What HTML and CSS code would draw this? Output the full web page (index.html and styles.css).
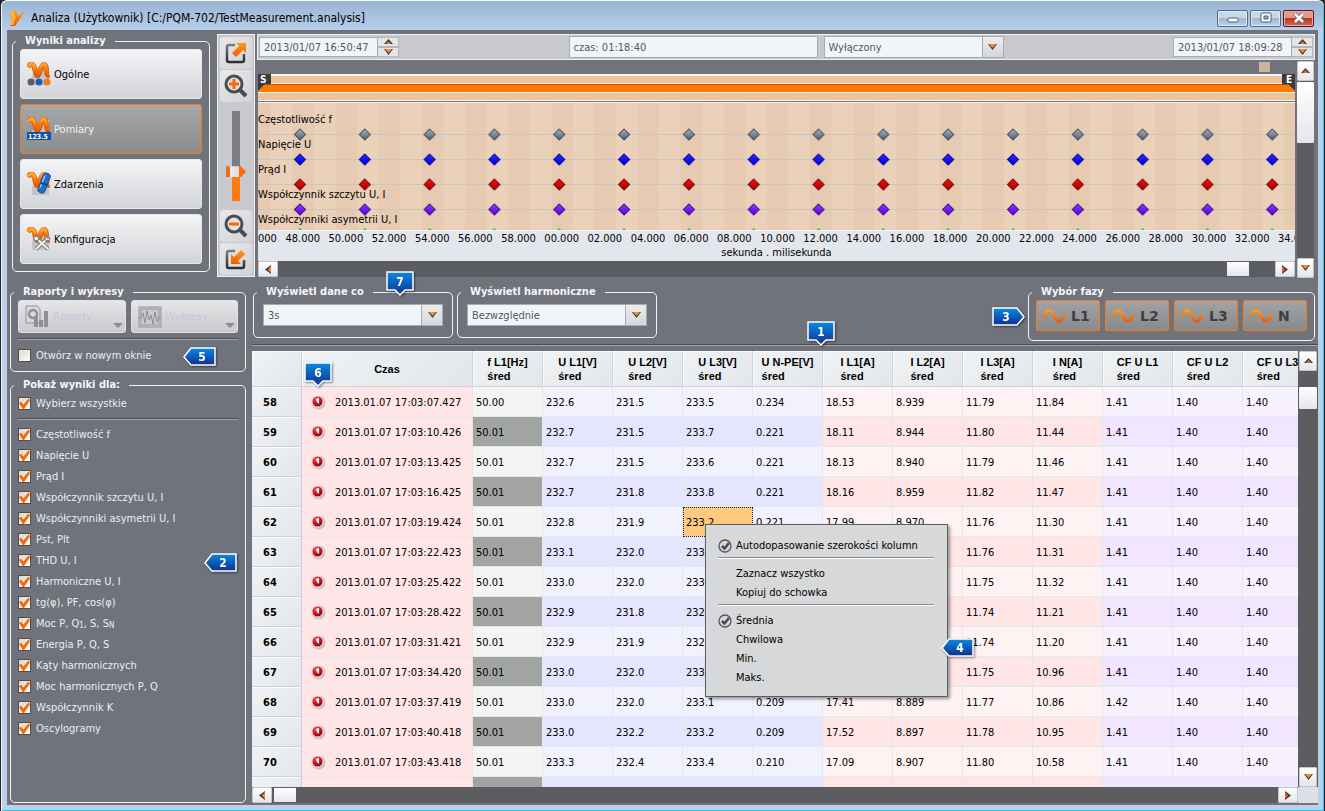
FILE: index.html
```html
<!DOCTYPE html>
<html lang="pl">
<head>
    <meta charset="UTF-8">
    <meta name="viewport" content="width=device-width, initial-scale=1.0">
    <title>Analiza</title>
    <link rel="stylesheet" href="styles.css">
</head>
<body>
    <svg class="defs" width="0" height="0" aria-hidden="true">
        <defs>
            <linearGradient id="orange" x1="0" y1="0" x2="0" y2="1">
                <stop offset="0" stop-color="#ff9a1e"/><stop offset="1" stop-color="#f25a00"/>
            </linearGradient>
            <linearGradient id="blue" x1="0" y1="0" x2="0" y2="1">
                <stop offset="0" stop-color="#0a8ae6"/><stop offset="1" stop-color="#10308c"/>
            </linearGradient>
            <linearGradient id="dark" x1="0" y1="0" x2="0" y2="1">
                <stop offset="0" stop-color="#77797d"/><stop offset="1" stop-color="#2c2e32"/>
            </linearGradient>
            <radialGradient id="red" cx="0.4" cy="0.3" r="0.7">
                <stop offset="0" stop-color="#f06060"/><stop offset="0.6" stop-color="#c80c14"/><stop offset="1" stop-color="#8c0008"/>
            </radialGradient>
            <linearGradient id="dGrey" x1="0" y1="0" x2="0" y2="1"><stop offset="0" stop-color="#a9b4c0"/><stop offset="1" stop-color="#4e5c70"/></linearGradient>
            <linearGradient id="dBlue" x1="0" y1="0" x2="0" y2="1"><stop offset="0" stop-color="#2a2aff"/><stop offset="1" stop-color="#0000e0"/></linearGradient>
            <linearGradient id="dRed" x1="0" y1="0" x2="0" y2="1"><stop offset="0" stop-color="#f81010"/><stop offset="1" stop-color="#a00000"/></linearGradient>
            <linearGradient id="dViolet" x1="0" y1="0" x2="0" y2="1"><stop offset="0" stop-color="#8a3cff"/><stop offset="1" stop-color="#5a00e0"/></linearGradient>
        </defs>
        <symbol id="wave" viewBox="0 0 24 24">
            <path d="M13 3h9v20H5v-9z" fill="#c2c4c9"/>
            <path d="M1 5C4 0 7 2 8 8S11 16 13 9S18 0 19 6S20 14 22 13" fill="none" stroke="#c65204" stroke-width="5"/>
            <path d="M1 5C4 0 7 2 8 8S11 15 13 8S18 0 19 6S20 13 22 12" fill="none" stroke="url(#orange)" stroke-width="4"/>
            <path d="M1 4C4 0 7 1 8 6M14 5C16 1 18 1 19 5" fill="none" stroke="#ffb75a" stroke-width="1"/>
        </symbol>
        <symbol id="sine" viewBox="0 0 22 16">
            <path d="M1 9C4 0 8 1 11 8S18 15 21 7" fill="none" stroke="url(#orange)" stroke-width="3"/>
        </symbol>
        <symbol id="up" viewBox="0 0 9 6"><path d="M0 5L4.500 0L9 5z" fill="#3c3c3f"/><path d="M2 5L4.500 2L7 5z" fill="#ff6a1a"/></symbol>
        <symbol id="down" viewBox="0 0 9 6"><path d="M0 0L4.500 6L9 0z" fill="#3c3c3f"/><path d="M1 0L4.500 4L8 0z" fill="#ff8a2a"/></symbol>
        <symbol id="left" viewBox="0 0 6 9"><path d="M6 0L0 4.500L6 9z" fill="#3c3c3f"/><path d="M6 1L3 4.500L6 8z" fill="#ff8a2a"/></symbol>
        <symbol id="right" viewBox="0 0 6 9"><path d="M0 0L6 4.500L0 9z" fill="#3c3c3f"/><path d="M0 1L3 4.500L0 8z" fill="#ff5a1a"/></symbol>
        <symbol id="tag-down" viewBox="0 0 30 26">
            <path d="M1 1h26v18h-8l-5 5l-5-5H1z" fill="url(#blue)" stroke="#fff" stroke-width="1.500"/>
        </symbol>
        <symbol id="tag-left" viewBox="0 0 34 20">
            <path d="M1 10L8 1h24v17H8z" fill="url(#blue)" stroke="#fff" stroke-width="1.500"/>
        </symbol>
        <symbol id="tag-right" viewBox="0 0 34 20">
            <path d="M32 10L25 1H1v17h24z" fill="url(#blue)" stroke="#fff" stroke-width="1.500"/>
        </symbol>
        <symbol id="ticked" viewBox="0 0 14 14">
            <circle cx="7" cy="7" r="6" fill="none" stroke="#55575f" stroke-width="1.300"/>
            <path d="M4 7l2.500 2.500L11 4" fill="none" stroke="#45474f" stroke-width="2.500"/>
        </symbol>
        <symbol id="clock" viewBox="0 0 15 15">
            <circle cx="7.500" cy="7.500" r="7" fill="#c9c4c8"/>
            <circle cx="6.500" cy="6.500" r="5.500" fill="url(#red)" stroke="#eee" stroke-width="1"/>
            <path d="M5 4l3-1v6l-2-2z" fill="#fff"/>
        </symbol>
    </svg>

    <div class="window">
        <header class="titlebar">
            <svg class="logo" width="17" height="18" viewBox="0 0 17 18">
                <path d="M1 2h6l2 5l7-5l-6 9l-4 6H1l2-4z" fill="url(#orange)"/>
                <path d="M1 2h3l3 6l-3 8H1l2-5z" fill="#ffb52a"/>
            </svg>
            <h1>Analiza (Użytkownik) [C:/PQM-702/TestMeasurement.analysis]</h1>
            <div class="window-buttons">
                <button aria-label="Minimalizuj"><svg width="12" height="12"><rect x="1" y="6" width="10" height="4" rx="1" fill="#fff" stroke="#555d6c"/></svg></button>
                <button aria-label="Maksymalizuj"><svg width="12" height="12"><rect x="1" y="1" width="10" height="9" rx="1" fill="#fff" stroke="#555d6c"/><rect x="4" y="4" width="4" height="3" fill="#9db6d4" stroke="#555d6c"/></svg></button>
                <button class="close" aria-label="Zamknij"><svg width="12" height="12"><path d="M2 2l8 8M10 2l-8 8" stroke="#555d6c" stroke-width="4"/><path d="M2 2l8 8M10 2l-8 8" stroke="#fff" stroke-width="2.500"/></svg></button>
            </div>
        </header>

        <main class="content">
            <section class="top">
                <fieldset class="results">
                    <legend>Wyniki analizy</legend>
                    <button class="nav">
                        <svg width="24" height="24"><use href="#wave"/><circle cx="4" cy="20" r="3.500" fill="#5a5d63"/><circle cx="12" cy="20" r="3.500" fill="#1a5fc0"/><circle cx="20" cy="20" r="3.500" fill="#f47a1e"/></svg>
                        Ogólne
                    </button>
                    <button class="nav active">
                        <svg width="24" height="24"><use href="#wave"/><rect x="0" y="15" width="24" height="8" fill="#1450a8"/><text x="1" y="22" font-size="7" font-weight="bold" fill="#fff">123.5</text></svg>
                        Pomiary
                    </button>
                    <button class="nav">
                        <svg width="24" height="24"><use href="#wave"/><path d="M16 3Q17 1 19 1L22 2Q24 3 23 6L18 19Q17 22 14 21L12 20Q10 19 11 17z" fill="#1f6fc8" stroke="#164f94"/><path d="M17 4l2-1l-5 12l-2 2z" fill="#9fd0ff"/><path d="M14 11l6 2" stroke="#0f3f80" stroke-width="2"/></svg>
                        Zdarzenia
                    </button>
                    <button class="nav">
                        <svg width="24" height="24"><use href="#wave"/><path d="M9 11L21 22M21 11L9 22" stroke="#77797e" stroke-width="4"/><path d="M9 11L21 22M21 11L9 22" stroke="#f4f4f4" stroke-width="2"/><path d="M7 9l5 1l-1 4l-4-1zM18 8l2 3l3 0l-1 3l-4-1z" fill="#f4f4f4" stroke="#77797e"/></svg>
                        Konfiguracja
                    </button>
                </fieldset>

                <div class="toolbar">
                    <button aria-label="Powiększ okno">
                        <svg width="24" height="24"><path d="M11 4H5Q3 4 3 6v13q0 2 2 2h13q2 0 2-2v-6" fill="none" stroke="url(#dark)" stroke-width="2.500"/><path d="M12 2h10v10l-3-3l-7 7l-4-4l7-7z" fill="url(#orange)"/></svg>
                    </button>
                    <button aria-label="Przybliż">
                        <svg width="24" height="24"><path d="M16 16l6 6" stroke="#4a4c50" stroke-width="4"/><circle cx="10" cy="10" r="8" fill="#e3e3e6" stroke="#4a4c50" stroke-width="3"/><path d="M10 5v10M5 10h10" stroke="#f46a0a" stroke-width="3"/></svg>
                    </button>
                    <input type="range" class="zoom" min="0" max="100" value="30" aria-label="Powiększenie">
                    <button aria-label="Oddal">
                        <svg width="24" height="24"><path d="M16 16l6 6" stroke="#4a4c50" stroke-width="4"/><circle cx="10" cy="10" r="8" fill="#e3e3e6" stroke="#4a4c50" stroke-width="3"/><path d="M5 10h10" stroke="#f46a0a" stroke-width="3"/></svg>
                    </button>
                    <button aria-label="Dopasuj">
                        <svg width="24" height="24"><path d="M11 4H5Q3 4 3 6v13q0 2 2 2h13q2 0 2-2v-6" fill="none" stroke="url(#dark)" stroke-width="2.500"/><path d="M7 17V7l3 3l7-7l4 4l-7 7l3 3z" fill="url(#orange)"/></svg>
                    </button>
                </div>

                <div class="timeline">
                    <div class="filters">
                        <div class="spin">
                            <input type="text" value="2013/01/07 16:50:47" aria-label="Początek">
                            <div class="spin-buttons">
                                <button aria-label="Później"><svg width="9" height="6"><use href="#up"/></svg></button>
                                <button aria-label="Wcześniej"><svg width="9" height="6"><use href="#down"/></svg></button>
                            </div>
                        </div>
                        <div class="middle">
                            <input type="text" class="duration" value="czas: 01:18:40" aria-label="Czas trwania">
                            <div class="combo">
                                <select aria-label="Tryb"><option>Wyłączony</option></select>
                                <span><svg width="9" height="6"><use href="#down"/></svg></span>
                            </div>
                        </div>
                        <div class="spin">
                            <input type="text" value="2013/01/07 18:09:28" aria-label="Koniec">
                            <div class="spin-buttons">
                                <button aria-label="Później"><svg width="9" height="6"><use href="#up"/></svg></button>
                                <button aria-label="Wcześniej"><svg width="9" height="6"><use href="#down"/></svg></button>
                            </div>
                        </div>
                    </div>
                    <div class="plot-row">
                        <div class="plot">
                            <div class="overview"><i></i></div>
                            <div class="range">
                                <div class="band"></div>
                                <div class="band selected"></div>
                                <div class="band"></div>
                                <span class="flag start">S</span>
                                <span class="flag end">E</span>
                            </div>
                            <div class="chart">
                                <svg width="100%" height="127">
                                    <defs>
                                        <pattern id="stripes" x="34.500" width="43.130" height="127" patternUnits="userSpaceOnUse"><rect width="21.600" height="127" fill="#e6cbb2"/></pattern>
                                        <pattern id="samples" x="10" width="64.820" height="127" patternUnits="userSpaceOnUse">
                                            <path d="M32 26l5.500 5.500l-5.500 5.500l-5.500-5.500z" fill="url(#dGrey)" stroke="#3c4654"/>
                                            <path d="M32 51l5.500 5.500l-5.500 5.500l-5.500-5.500z" fill="url(#dBlue)" stroke="#000090"/>
                                            <path d="M32 76l5.500 5.500l-5.500 5.500l-5.500-5.500z" fill="url(#dRed)" stroke="#700000"/>
                                            <path d="M32 101l5.500 5.500l-5.500 5.500l-5.500-5.500z" fill="url(#dViolet)" stroke="#380088"/>
                                            <path d="M32 125l2 2h-4z" fill="#1fd01f"/>
                                        </pattern>
                                    </defs>
                                    <rect width="100%" height="127" fill="#ebd1ba"/>
                                    <rect width="100%" height="127" fill="url(#stripes)"/>
                                    <path d="M0 31.500H4000M0 56.500H4000M0 81.500H4000M0 106.500H4000" stroke="#c8c6c2"/>
                                    <rect width="100%" height="127" fill="url(#samples)"/>
                                </svg>
                                <ul class="lanes">
                                    <li>Częstotliwość f</li>
                                    <li>Napięcie U</li>
                                    <li>Prąd I</li>
                                    <li>Współczynnik szczytu U, I</li>
                                    <li>Współczynniki asymetrii U, I</li>
                                </ul>
                            </div>
                            <div class="axis">
                                <div class="ticks" id="ticks"></div>
                                <p>sekunda . milisekunda</p>
                            </div>
                            <div class="hscroll far">
                                <button aria-label="W lewo"><svg width="6" height="9"><use href="#left"/></svg></button>
                                <div class="track"><i></i></div>
                                <button aria-label="W prawo"><svg width="6" height="9"><use href="#right"/></svg></button>
                            </div>
                        </div>
                        <div class="vscroll tall">
                            <button aria-label="W górę"><svg width="9" height="6"><use href="#up"/></svg></button>
                            <div class="track"><i></i></div>
                            <button aria-label="W dół"><svg width="9" height="6"><use href="#down"/></svg></button>
                        </div>
                    </div>
                </div>
            </section>

            <section class="bottom">
                <aside class="side">
                    <fieldset class="reports">
                        <legend>Raporty i wykresy</legend>
                        <div class="report-buttons">
                            <button disabled>
                                <svg width="24" height="24"><path d="M1 1h11l3 3v14H1z" fill="#d9dadd" stroke="#8e9095"/><circle cx="8" cy="9" r="4" fill="none" stroke="#8e9095" stroke-width="2.500"/><path d="M11 12v10M16 15v7M21 6v16" stroke="#8e9095" stroke-width="4"/></svg>
                                Raporty
                            </button>
                            <button disabled>
                                <svg width="24" height="24"><rect x="1" y="2" width="22" height="20" fill="#c9cacd" stroke="#96989d"/><rect x="3" y="4" width="18" height="16" fill="none" stroke="#96989d"/><path d="M0 13h3l2-5l2 10l2-12l2 9l2-5l2 9l2-12l2 10l2-5h2" fill="none" stroke="#8b8d92" stroke-width="1"/></svg>
                                Wykresy
                            </button>
                        </div>
                        <hr>
                        <label class="check"><input type="checkbox">Otwórz w nowym oknie</label>
                        <svg class="callout c5" width="34" height="20"><use href="#tag-left"/><text x="19" y="14">5</text></svg>
                    </fieldset>
                    <fieldset class="show">
                        <legend>Pokaż wyniki dla:</legend>
                        <label class="check"><input type="checkbox" checked>Wybierz wszystkie</label>
                        <hr>
                        <label class="check"><input type="checkbox" checked>Częstotliwość f</label>
                        <label class="check"><input type="checkbox" checked>Napięcie U</label>
                        <label class="check"><input type="checkbox" checked>Prąd I</label>
                        <label class="check"><input type="checkbox" checked>Współczynnik szczytu U, I</label>
                        <label class="check"><input type="checkbox" checked>Współczynniki asymetrii U, I</label>
                        <label class="check"><input type="checkbox" checked>Pst, Plt</label>
                        <label class="check"><input type="checkbox" checked>THD U, I</label>
                        <label class="check"><input type="checkbox" checked>Harmoniczne U, I</label>
                        <label class="check"><input type="checkbox" checked>tg(φ), PF, cos(φ)</label>
                        <label class="check"><input type="checkbox" checked><span>Moc P, Q<small>1</small>, S, S<small>N</small></span></label>
                        <label class="check"><input type="checkbox" checked>Energia P, Q, S</label>
                        <label class="check"><input type="checkbox" checked>Kąty harmonicznych</label>
                        <label class="check"><input type="checkbox" checked>Moc harmonicznych P, Q</label>
                        <label class="check"><input type="checkbox" checked>Współczynnik K</label>
                        <label class="check"><input type="checkbox" checked>Oscylogramy</label>
                        <svg class="callout c2" width="34" height="20"><use href="#tag-left"/><text x="19" y="14">2</text></svg>
                    </fieldset>
                </aside>

                <div class="data">
                    <div class="options">
                        <fieldset class="option">
                            <legend>Wyświetl dane co</legend>
                            <div class="combo">
                                <select aria-label="Wyświetl dane co"><option>3s</option></select>
                                <span><svg width="9" height="6"><use href="#down"/></svg></span>
                            </div>
                            <svg class="callout c7" width="30" height="26"><use href="#tag-down"/><text x="14" y="15">7</text></svg>
                        </fieldset>
                        <fieldset class="option">
                            <legend>Wyświetl harmoniczne</legend>
                            <div class="combo">
                                <select aria-label="Wyświetl harmoniczne"><option>Bezwzględnie</option></select>
                                <span><svg width="9" height="6"><use href="#down"/></svg></span>
                            </div>
                        </fieldset>
                        <fieldset class="phases">
                            <legend>Wybór fazy</legend>
                            <div class="phase-buttons">
                                <button><svg width="22" height="16"><use href="#sine"/></svg>L1</button>
                                <button><svg width="22" height="16"><use href="#sine"/></svg>L2</button>
                                <button><svg width="22" height="16"><use href="#sine"/></svg>L3</button>
                                <button><svg width="22" height="16"><use href="#sine"/></svg>N</button>
                            </div>
                            <svg class="callout c3" width="34" height="20"><use href="#tag-right"/><text x="14" y="14">3</text></svg>
                        </fieldset>
                    </div>
                    <hr>
                    <div class="grid">
                        <div class="grid-row">
                            <div class="table-clip">
                                <table>
                                    <thead><tr id="head"></tr></thead>
                                    <tbody id="rows"></tbody>
                                </table>
                            </div>
                            <div class="vscroll">
                                <button aria-label="W górę"><svg width="9" height="6"><use href="#up"/></svg></button>
                                <div class="track"><i></i></div>
                                <button aria-label="W dół"><svg width="9" height="6"><use href="#down"/></svg></button>
                            </div>
                        </div>
                        <div class="grid-bottom">
                            <div class="hscroll">
                                <button aria-label="W lewo"><svg width="6" height="9"><use href="#left"/></svg></button>
                                <div class="track"><i></i></div>
                                <button aria-label="W prawo"><svg width="6" height="9"><use href="#right"/></svg></button>
                            </div>
                        </div>
                        <div class="menu" role="menu">
                            <button role="menuitem"><svg width="14" height="14"><use href="#ticked"/></svg>Autodopasowanie szerokości kolumn</button>
                            <hr>
                            <button role="menuitem">Zaznacz wszystko</button>
                            <button role="menuitem">Kopiuj do schowka</button>
                            <hr>
                            <button role="menuitem"><svg width="14" height="14"><use href="#ticked"/></svg>Średnia</button>
                            <button role="menuitem">Chwilowa</button>
                            <button role="menuitem">Min.</button>
                            <button role="menuitem">Maks.</button>
                        </div>
                        <svg class="callout c1" width="30" height="26"><use href="#tag-down"/><text x="14" y="15">1</text></svg>
                        <svg class="callout c6" width="30" height="26"><use href="#tag-down"/><text x="14" y="15">6</text></svg>
                        <svg class="callout c4" width="34" height="20"><use href="#tag-left"/><text x="19" y="14">4</text></svg>
                    </div>
                </div>
            </section>
        </main>
    </div>

    <script>
        const columns = ["f L1[Hz]", "U L1[V]", "U L2[V]", "U L3[V]", "U N-PE[V]", "I L1[A]", "I L2[A]", "I L3[A]", "I N[A]", "CF U L1", "CF U L2", "CF U L3"];
        const kinds = ["f", "u", "u", "u", "u", "i", "i", "i", "i", "cf", "cf", "cf"];
        const rows = [
            ["07.427", "50.00 232.6 231.5 233.5 0.234 18.53 8.939 11.79 11.84 1.41 1.40 1.40"],
            ["10.426", "50.01 232.7 231.5 233.7 0.221 18.11 8.944 11.80 11.44 1.41 1.40 1.40"],
            ["13.425", "50.01 232.7 231.5 233.6 0.221 18.13 8.940 11.79 11.46 1.41 1.40 1.40"],
            ["16.425", "50.01 232.7 231.8 233.8 0.221 18.16 8.959 11.82 11.47 1.41 1.40 1.40"],
            ["19.424", "50.01 232.8 231.9 233.2 0.221 17.99 8.970 11.76 11.30 1.41 1.40 1.40"],
            ["22.423", "50.01 233.1 232.0 233.3 0.215 17.95 8.961 11.76 11.31 1.41 1.40 1.40"],
            ["25.422", "50.01 233.0 232.0 233.2 0.214 17.90 8.950 11.75 11.32 1.41 1.40 1.40"],
            ["28.422", "50.01 232.9 231.8 232.9 0.213 17.82 8.941 11.74 11.21 1.41 1.40 1.40"],
            ["31.421", "50.01 232.9 231.9 232.9 0.212 17.76 8.930 11.74 11.20 1.41 1.40 1.40"],
            ["34.420", "50.01 233.0 232.0 233.0 0.210 17.55 8.902 11.75 10.96 1.41 1.40 1.40"],
            ["37.419", "50.01 233.0 232.0 233.1 0.209 17.41 8.889 11.77 10.86 1.42 1.40 1.40"],
            ["40.418", "50.01 233.0 232.2 233.2 0.209 17.52 8.897 11.78 10.95 1.41 1.40 1.40"],
            ["43.418", "50.01 233.3 232.4 233.4 0.210 17.09 8.907 11.80 10.58 1.41 1.40 1.40"]
        ];

        let head = '<th class="num"></th><th class="time">Czas</th>';
        columns.forEach(name => head += `<th><span>${name}<br>śred</span></th>`);
        document.getElementById("head").innerHTML = head;

        let body = "";
        rows.forEach((row, r) => {
            body += `<tr><th class="num">${58 + r}</th><td class="time"><svg width="15" height="15"><use href="#clock"/></svg>2013.01.07 17:03:${row[0]}</td>`;
            row[1].split(" ").forEach((value, c) => {
                const picked = r === 4 && c === 3 ? " picked" : "";
                body += `<td class="${kinds[c]}${picked}">${value}</td>`;
            });
            body += "</tr>";
        });
        body += '<tr><th class="num"></th><td class="time"></td>' + kinds.map(k => `<td class="${k}"></td>`).join("") + "</tr>";
        document.getElementById("rows").innerHTML = body;

        let ticks = "";
        for (let s = 46; s <= 94; s += 2) {
            ticks += `<span>${String(s % 60).padStart(2, "0")}.000</span>`;
        }
        document.getElementById("ticks").innerHTML = ticks;
    </script>
</body>
</html>
```
FILE: styles.css
```css
* {
    box-sizing: border-box;
}
body {
    margin: 0;
    height: 100vh;
    overflow: hidden;
    background: #22242a;
    font-family: "DejaVu Sans Condensed", "DejaVu Sans", sans-serif;
    font-size: 11px;
    color: #000;
}
button, input, select {
    font: inherit;
    color: inherit;
    margin: 0;
    padding: 0;
    border-radius: 0;
}
.defs {
    position: absolute;
}
svg {
    flex: none;
}
.window {
    height: 100vh;
    margin: 0 1px;
    padding: 0 6px 6px 5px;
    display: flex;
    flex-direction: column;
    background: #b9d1ea;
    border: 1px solid #f4f8fc;
    border-width: 1px 0 0 1px;
    border-radius: 6px 6px 0 0;
    box-shadow: inset -1px -1px 0 #2cc8dc;
}
.titlebar {
    flex: none;
    height: 29px;
    margin: 0 -5px 0 -5px;
    padding: 5px 9px 0 7px;
    display: flex;
    align-items: center;
    gap: 5px;
    background: linear-gradient(#98b3d2, #b7cfe9);
    border-radius: 6px 6px 0 0;
}
.titlebar h1 {
    flex: 1;
    margin: 0;
    font-size: 12px;
    font-weight: normal;
}
.window-buttons {
    display: flex;
    gap: 2px;
}
.window-buttons button {
    width: 31px;
    height: 17px;
    display: flex;
    align-items: center;
    justify-content: center;
    border: 1px solid #566a86;
    border-radius: 2px;
    background: linear-gradient(#c6d8ec 50%, #9db8d6 50%, #b8d0ea);
    box-shadow: inset 0 0 0 1px #dce8f5;
}
.window-buttons .close {
    border-color: #5a1020;
    background: linear-gradient(#e0998c 50%, #b83a24 50%, #cc6a4c);
    box-shadow: inset 0 0 0 1px #e8b0a4;
}
.content {
    flex: 1;
    min-height: 0;
    display: flex;
    flex-direction: column;
    gap: 6px;
    padding: 3px 0 2px 3px;
    background: #70737b;
}
fieldset {
    position: relative;
    min-width: 0;
    margin: 0;
    padding: 0 7px;
    border: 1px solid #f0f2f5;
    border-radius: 5px;
}
legend {
    height: 16px;
    margin-left: -4px;
    padding: 0 9px;
    line-height: 16px;
    font-weight: bold;
    color: #f4f6f9;
}
hr {
    width: 100%;
    height: 2px;
    margin: 0;
    border: 0;
    border-top: 1px solid #4a4c51;
    border-bottom: 1px solid #a4a7ad;
}

/* top part */
.top {
    flex: none;
    display: flex;
    height: 245px;
}
.results {
    width: 198px;
    height: 239px;
    margin: 0 7px 0 2px;
}
.nav {
    display: flex;
    align-items: center;
    gap: 3px;
    width: 100%;
    height: 50px;
    margin-bottom: 5px;
    padding-left: 6px;
    border: 1px solid #e6e7ea;
    border-radius: 3px;
    background: linear-gradient(#f4f4f6, #d3d4d8);
}
.nav.active {
    border-color: #f47a1e;
    background: linear-gradient(#a6a7a8, #8b8c8d);
    color: #f4f4f4;
}
.toolbar {
    width: 38px;
    margin: 1px 2px 1px 0;
    padding: 2px 2px 1px;
    display: flex;
    flex-direction: column;
    align-items: center;
    gap: 1px;
    border: 1px solid #f0f0f2;
    background: #c8c9cd;
}
.toolbar button {
    width: 32px;
    height: 32px;
    display: flex;
    align-items: center;
    justify-content: center;
    border: 0;
    border-radius: 3px;
    background: linear-gradient(135deg, #e8e8eb, #d2d3d7);
}
.zoom {
    appearance: none;
    writing-mode: vertical-lr;
    direction: rtl;
    width: 22px;
    height: 90px;
    margin: auto 0;
    background: linear-gradient(#7b7d82 65%, #ff7a10 65%) center / 8px 100% no-repeat;
}
.zoom::-webkit-slider-thumb {
    appearance: none;
    width: 20px;
    height: 11px;
    background: linear-gradient(90deg, #f06a10 4px, #ececee 4px, #dcdcde 13px, #ff6a10 13px);
    clip-path: polygon(0 0, 75% 0, 100% 50%, 75% 100%, 0 100%);
}
.timeline {
    flex: 1;
    min-width: 0;
    display: flex;
    flex-direction: column;
    margin: 1px 3px 0 0;
}
.filters {
    display: flex;
    align-items: center;
    justify-content: space-between;
    height: 26px;
    padding: 0 1px;
    border: 1px solid #eeeff1;
    background: #c8c9cd;
}
.spin {
    display: flex;
    width: 140px;
    height: 20px;
}
.spin input, .duration {
    flex: 1;
    min-width: 0;
    height: 100%;
    padding: 0 4px;
    border: 1px solid #a8abb0;
    background: #f1f5fa;
    color: #55575c;
}
.spin-buttons {
    width: 21px;
    display: flex;
    flex-direction: column;
}
.spin-buttons button {
    height: 10px;
    display: flex;
    align-items: center;
    justify-content: center;
    border: 1px solid #b4b7bc;
    border-left: 0;
    background: #e4e5e8;
}
.middle {
    display: flex;
    gap: 6px;
    width: 435px;
    height: 22px;
}
.combo {
    position: relative;
    width: 180px;
    height: 22px;
}
.combo select {
    appearance: none;
    width: 100%;
    height: 100%;
    padding: 0 4px;
    border: 1px solid #a8abb0;
    background: #f1f5fa;
    color: #55575c;
}
.combo span {
    position: absolute;
    top: 0;
    right: 0;
    width: 22px;
    height: 100%;
    display: flex;
    align-items: center;
    justify-content: center;
    border: 1px solid #a8abb0;
    background: linear-gradient(#ededf0, #d6d7db);
    pointer-events: none;
}
.plot-row {
    flex: 1;
    display: flex;
    gap: 2px;
    padding: 1px 1px 0 1px;
}
.plot {
    flex: 1;
    min-width: 0;
}
.overview {
    height: 13px;
    padding: 1px 25px 0 0;
}
.overview i {
    display: block;
    width: 11px;
    height: 10px;
    margin-left: auto;
    background: #cfb29a;
}
.range {
    position: relative;
    height: 27px;
    padding: 2px 0 1px;
    display: flex;
    flex-direction: column;
    justify-content: space-between;
    background: #f7f4f2;
}
.band {
    height: 7px;
    background: #efc39a;
}
.band.selected {
    height: 8px;
    border-top: 1px solid #b85a08;
    background: #ff7800;
}
.flag {
    position: absolute;
    top: 0;
    width: 13px;
    height: 17px;
    font-size: 10px;
    line-height: 11px;
    font-weight: bold;
    color: #fff;
    background: #3a3b40;
}
.flag.start {
    left: 0;
    padding-left: 2px;
    clip-path: polygon(0 0, 100% 0, 100% 60%, 50% 60%, 0 100%);
}
.flag.end {
    right: 0;
    padding-left: 4px;
    clip-path: polygon(0 0, 100% 0, 100% 100%, 50% 60%, 0 60%);
}
.chart {
    position: relative;
    height: 129px;
    margin-top: 1px;
    border: 1px solid #f4f4f6;
    border-width: 1px 0;
}
.chart svg {
    display: block;
}
.lanes {
    position: absolute;
    top: 4px;
    left: 0;
    margin: 0;
    padding: 0;
    list-style: none;
}
.lanes li {
    height: 25px;
    line-height: 25px;
}
.axis {
    height: 30px;
    overflow: hidden;
    background: #e4e6ee;
    text-align: center;
}
.ticks {
    display: flex;
    height: 15px;
    margin: 0 -22px 0 -20px;
    line-height: 15px;
}
.ticks span {
    flex: 1;
}
.axis p {
    margin: 0;
    line-height: 14px;
}

/* scroll bars */
.hscroll {
    display: flex;
    height: 16px;
    background: #5c5d61;
}
.hscroll button, .vscroll button {
    flex: none;
    display: flex;
    align-items: center;
    justify-content: center;
    width: 20px;
    height: 16px;
    border: 1px solid #c4c6ca;
    border-radius: 1px;
    background: linear-gradient(#fff, #e4e6ea);
}
.hscroll .track {
    flex: 1;
    padding: 1px 2px;
}
.hscroll i {
    display: block;
    width: 22px;
    height: 14px;
    background: linear-gradient(#fff, #e4e6ea);
}
.far i {
    margin: 0 24px 0 auto;
}
.vscroll {
    display: flex;
    flex-direction: column;
    width: 17px;
    background: #5c5d61;
}
.vscroll button {
    width: 100%;
    height: 20px;
}
.vscroll .track {
    flex: 1;
    padding-top: 16px;
}
.vscroll i {
    display: block;
    height: 22px;
    border-radius: 1px;
    background: linear-gradient(#fff, #e4e6ea);
}
.tall .track {
    padding-top: 1px;
}
.tall i {
    height: 61px;
}

/* bottom part */
.bottom {
    flex: 1;
    min-height: 0;
    display: flex;
    gap: 6px;
}
.side {
    width: 236px;
    display: flex;
    flex-direction: column;
    gap: 5px;
}
.reports {
    height: 88px;
}
.report-buttons {
    display: flex;
    gap: 5px;
    margin-bottom: 5px;
}
.report-buttons button {
    position: relative;
    flex: 1;
    height: 33px;
    display: flex;
    align-items: center;
    gap: 4px;
    padding-left: 6px;
    border: 1px solid #e2e3e6;
    border-radius: 3px;
    background: linear-gradient(#e6e6e8, #c9cace);
    color: #c3c7da;
}
.report-buttons button::after {
    content: "";
    position: absolute;
    right: 2px;
    bottom: 4px;
    border: 5px solid transparent;
    border-top-color: #8b8d92;
    border-bottom: 0;
}
.check {
    display: flex;
    align-items: center;
    gap: 5px;
    height: 21px;
    color: #eceef2;
}
.reports .check {
    margin-top: 5px;
}
.check input {
    appearance: none;
    position: relative;
    width: 13px;
    height: 13px;
    border: 1px solid #5a4a40;
    background: linear-gradient(135deg, #d8d8d4, #fff);
}
.check input:checked::after {
    content: "";
    position: absolute;
    inset: 0;
    background: #f4690a;
    clip-path: polygon(0 45%, 20% 35%, 40% 60%, 85% 5%, 100% 20%, 45% 100%, 35% 100%);
}
.check small {
    font-size: 8px;
    vertical-align: -1px;
}
.show {
    flex: 1;
}
.show hr {
    margin: 4px 0;
}
.data {
    flex: 1;
    min-width: 0;
    display: flex;
    flex-direction: column;
}
.options {
    display: flex;
    gap: 4px;
    height: 57px;
    padding: 0 3px 0 1px;
}
.option {
    width: 200px;
    height: 54px;
    padding: 4px 9px;
}
.option legend {
    margin-left: -6px;
}
.phases {
    margin-left: auto;
    height: 57px;
}
.phase-buttons {
    display: flex;
    gap: 5px;
}
.phase-buttons button {
    display: flex;
    align-items: center;
    gap: 6px;
    width: 64px;
    height: 31px;
    padding-left: 6px;
    border: 1px solid #f47a1e;
    border-radius: 2px;
    background: linear-gradient(#a2a3a4, #88898a);
    font-family: "DejaVu Sans", sans-serif;
    font-size: 14px;
    font-weight: bold;
    color: #3c3e42;
}
.data > hr {
    margin: 3px 0 5px;
}
.grid {
    position: relative;
    flex: 1;
    min-height: 0;
    display: flex;
    flex-direction: column;
}
.grid-row {
    flex: 1;
    min-height: 0;
    display: flex;
}
.grid .vscroll {
    width: 20px;
    padding: 0 1px;
}
.table-clip {
    flex: 1;
    min-width: 0;
    overflow: hidden;
    background: #e8ebef;
}
.grid-bottom {
    padding-right: 20px;
    background: #dcdfe8;
}
table {
    width: 1061px;
    table-layout: fixed;
    border-collapse: separate;
    border-spacing: 0;
}
th, td {
    width: 70px;
    height: 30px;
    padding: 1px 0 0 3px;
    border: 1px solid #e0e8f0;
    border-width: 0 1px 1px 0;
    text-align: left;
    white-space: nowrap;
}
thead th {
    height: 36px;
    padding: 0;
    border-color: #cfd3d9;
    box-shadow: inset 1px 1px 0 #f8fafc;
    background: linear-gradient(135deg, #f0f3f5, #e2e6ea);
    font-family: "Liberation Sans", sans-serif;
    text-align: center;
    line-height: 14px;
}
thead span {
    display: inline-block;
    text-align: left;
}
th.num {
    width: 50px;
}
tbody .num {
    padding-left: 11px;
    border-color: #cfd3d9;
    box-shadow: inset 0 1px 0 #f8fafc;
    background: linear-gradient(135deg, #f0f3f5, #e2e6ea);
}
th.time, td.time {
    width: 171px;
}
td.time {
    padding-left: 9px;
    background: #ffe5e5;
}
.time svg {
    margin-right: 9px;
    vertical-align: middle;
}
td.f {
    background: #f4f4f4;
}
td.u {
    background: #f2f2ff;
}
td.i {
    background: #fff2f2;
}
td.cf {
    background: #f8f2ff;
}
tr:nth-child(even) td.f {
    background: #a2a4a2;
}
tr:nth-child(even) td.u {
    background: #e5e5ff;
}
tr:nth-child(even) td.i {
    background: #ffe5e5;
}
tr:nth-child(even) td.cf {
    background: #f2e5ff;
}
tbody td.picked {
    background: #ffc980;
    outline: 1px dotted #223;
    outline-offset: -1px;
}

/* context menu over the table */
.menu {
    position: absolute;
    top: 173px;
    left: 453px;
    width: 243px;
    padding: 11px 13px 9px 12px;
    border: 1px solid #5c5e62;
    background: #d6d8d9;
    box-shadow: 2px 2px 3px rgba(0, 0, 0, 0.4);
}
.menu button {
    display: flex;
    align-items: center;
    gap: 4px;
    width: 100%;
    height: 19px;
    padding: 0;
    border: 0;
    background: none;
    text-align: left;
    white-space: nowrap;
}
.menu button:not(:has(svg)) {
    padding-left: 18px;
}
.menu hr {
    margin: 2px 0 5px;
    border-top-color: #8a8c8f;
    border-bottom-color: #fff;
}

/* numbered callouts */
.callout {
    position: absolute;
    overflow: visible;
    filter: drop-shadow(1px 1px 1px rgba(0, 0, 0, 0.5));
}
.callout text {
    font-size: 12px;
    font-weight: bold;
    fill: #fff;
    text-anchor: middle;
}
.c1 {
    top: -30px;
    left: 555px;
}
.c2 {
    top: 160px;
    right: 7px;
}
.c3 {
    top: 7px;
    left: -37px;
}
.c4 {
    top: 287px;
    left: 689px;
}
.c5 {
    top: 47px;
    right: 28px;
}
.c6 {
    top: 11px;
    left: 52px;
}
.c7 {
    top: -29px;
    left: 132px;
}
```
